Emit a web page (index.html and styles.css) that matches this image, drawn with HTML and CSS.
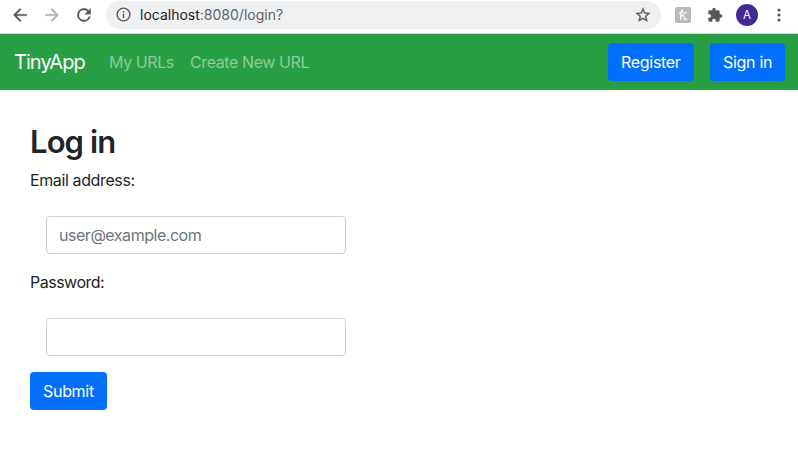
FILE: index.html
```html
<!DOCTYPE html>
<html lang="en">
<head>
<meta charset="utf-8">
<title>TinyApp</title>
<link rel="stylesheet" href="styles.css">
</head>
<body>
<div class="toolbar">
  <svg class="icon back" viewBox="0 0 24 24"><path d="M20 11H7.83l5.59-5.59L12 4l-8 8 8 8 1.41-1.41L7.83 13H20z"/></svg>
  <svg class="icon forward" viewBox="0 0 24 24"><path d="M12 4l-1.41 1.41L16.17 11H4v2h12.17l-5.58 5.59L12 20l8-8z"/></svg>
  <svg class="icon reload" viewBox="0 0 24 24"><path d="M17.65 6.35A7.96 7.96 0 0 0 12 4a8 8 0 1 0 7.73 10h-2.08A6 6 0 1 1 12 6c1.66 0 3.14.69 4.22 1.78L13 11h7V4z"/></svg>
  <div class="omnibox">
    <svg class="info" viewBox="0 0 24 24"><path d="M11 17h2v-6h-2zm1-15a10 10 0 1 0 0 20 10 10 0 0 0 0-20zm0 18a8 8 0 1 1 0-16 8 8 0 0 1 0 16zM11 9h2V7h-2z"/></svg>
    <span class="url"><span class="host">localhost</span>:8080/login?</span>
    <svg class="star" viewBox="0 0 24 24"><path d="M22 9.24l-7.19-.62L12 2 9.19 8.63 2 9.24l5.46 4.73L5.82 21 12 17.27 18.18 21l-1.63-7.03zM12 15.4l-3.76 2.27 1-4.28-3.32-2.88 4.38-.38L12 6.1l1.71 4.04 4.38.38-3.32 2.88 1 4.28z"/></svg>
  </div>
  <svg class="honey" viewBox="0 0 16 16"><rect width="16" height="16" rx="1.8"/><path d="M4.300 6.200C6.500 5.500 8 4.300 7.400 3.300 6.700 2.600 6 4.500 5.900 6.500L5.500 12.500C6 9.500 7.300 7.800 8.600 8c1.500.4-.5 4.600 1.200 4.600.9 0 1.500-.5 2-1.100M8.200 5.900h3"/></svg>
  <svg class="puzzle" viewBox="0 0 24 24"><path d="M20.500 11H19V7a2 2 0 0 0-2-2h-4V3.500a2.500 2.500 0 0 0-5 0V5H4a2 2 0 0 0-1.990 2v3.800H3.500a2.700 2.700 0 0 1 0 5.400H2V20a2 2 0 0 0 2 2h3.800v-1.500a2.700 2.700 0 0 1 5.400 0V22H17a2 2 0 0 0 2-2v-4h1.500a2.500 2.500 0 0 0 0-5z"/></svg>
  <span class="avatar">A</span>
  <svg class="dots" viewBox="0 0 4 14"><circle cx="2" cy="2" r="1.600"/><circle cx="2" cy="7" r="1.600"/><circle cx="2" cy="12" r="1.600"/></svg>
</div>
<nav class="navbar">
  <a class="brand">TinyApp</a>
  <a class="link urls">My URLs</a>
  <a class="link create">Create New URL</a>
  <button class="btn register">Register</button>
  <button class="btn signin">Sign in</button>
</nav>
<main class="content">
  <h2 class="title">Log in</h2>
  <form class="form">
    <label class="label" for="email">Email address:</label>
    <input class="field" id="email" type="email" placeholder="user@example.com">
    <label class="label pass" for="password">Password:</label>
    <input class="field" id="password" type="password">
    <button class="btn submit" type="button">Submit</button>
  </form>
</main>
</body>
</html>
```
FILE: styles.css
```css
* { box-sizing: border-box; }
body {
  margin: 0;
  background: #fff;
  color: #212529;
  font: 16px/24px Inter, "Liberation Sans", sans-serif;
  overflow: hidden;
}
.toolbar {
  display: flex;
  align-items: center;
  height: 34px;
  padding: 0 0 4px 11px;
  border-bottom: 1px solid #dcdfe1;
}
svg { flex: none; fill: #55585d; }
.icon { width: 20px; height: 20px; stroke: #55585d; stroke-width: .4; }
.back { margin-left: -1px; }
.forward { margin-left: 12px; fill: #b0b2b4; stroke: #b0b2b4; }
.reload { margin-left: 12px; }
.omnibox {
  display: flex;
  align-items: center;
  width: 555px;
  height: 28px;
  margin-left: 12px;
  padding: 0 9px;
  border-radius: 14px;
  background: #eff0f2;
}
.info { width: 17px; height: 17px; }
.url {
  flex: 1;
  margin-left: 8px;
  color: #5f6368;
  font-size: 14px;
  white-space: nowrap;
}
.host { color: #202124; }
.star { width: 18px; height: 18px; stroke: #55585d; stroke-width: .3; }
.honey { width: 16px; height: 16px; margin-left: 14px; fill: #b9b9b9; }
.honey path { fill: none; stroke: #fff; stroke-width: 1.2; stroke-linecap: round; stroke-linejoin: round; }
.puzzle { width: 16px; height: 16px; margin-left: 16px; }
.avatar {
  flex: none;
  width: 22px;
  height: 22px;
  margin-left: 13px;
  border-radius: 50%;
  background: #452897;
  color: #fff;
  font-size: 11.5px;
  line-height: 22px;
  text-align: center;
}
.dots { width: 4px; height: 14px; margin-left: 19px; }
.navbar {
  display: flex;
  align-items: center;
  height: 56px;
  padding: 0 13px 0 14px;
  background: #289e45;
  white-space: nowrap;
}
.brand { width: 95px; color: #fff; font-size: 20px; letter-spacing: -.95px; }
.link { color: #8ccb9a; letter-spacing: -.4px; }
.urls { width: 81px; }
.create { flex: 1; }
.btn {
  height: 38px;
  padding: 0 0 0 13px;
  border: 0;
  border-radius: 4px;
  background: #0370fd;
  color: #fff;
  font: inherit;
  letter-spacing: -.3px;
  text-align: left;
  white-space: nowrap;
}
.register { width: 86px; margin-right: 16px; }
.signin { width: 75px; }
.content { padding: 33px 30px; }
.title {
  margin: 0 0 7px;
  font-size: 31px;
  line-height: 38px;
  font-weight: 600;
  letter-spacing: -.9px;
}
.form { display: flex; flex-direction: column; align-items: flex-start; }
.label { letter-spacing: -.38px; }
.pass { letter-spacing: -.5px; }
.field {
  width: 300px;
  height: 38px;
  margin: 24px 16px 16px;
  padding: 0 12px;
  border: 1px solid #c8d0d8;
  border-radius: 4px;
  font: inherit;
  letter-spacing: -.47px;
}
.field::placeholder { color: #6c757d; opacity: 1; }
.submit { width: 77px; }
```
